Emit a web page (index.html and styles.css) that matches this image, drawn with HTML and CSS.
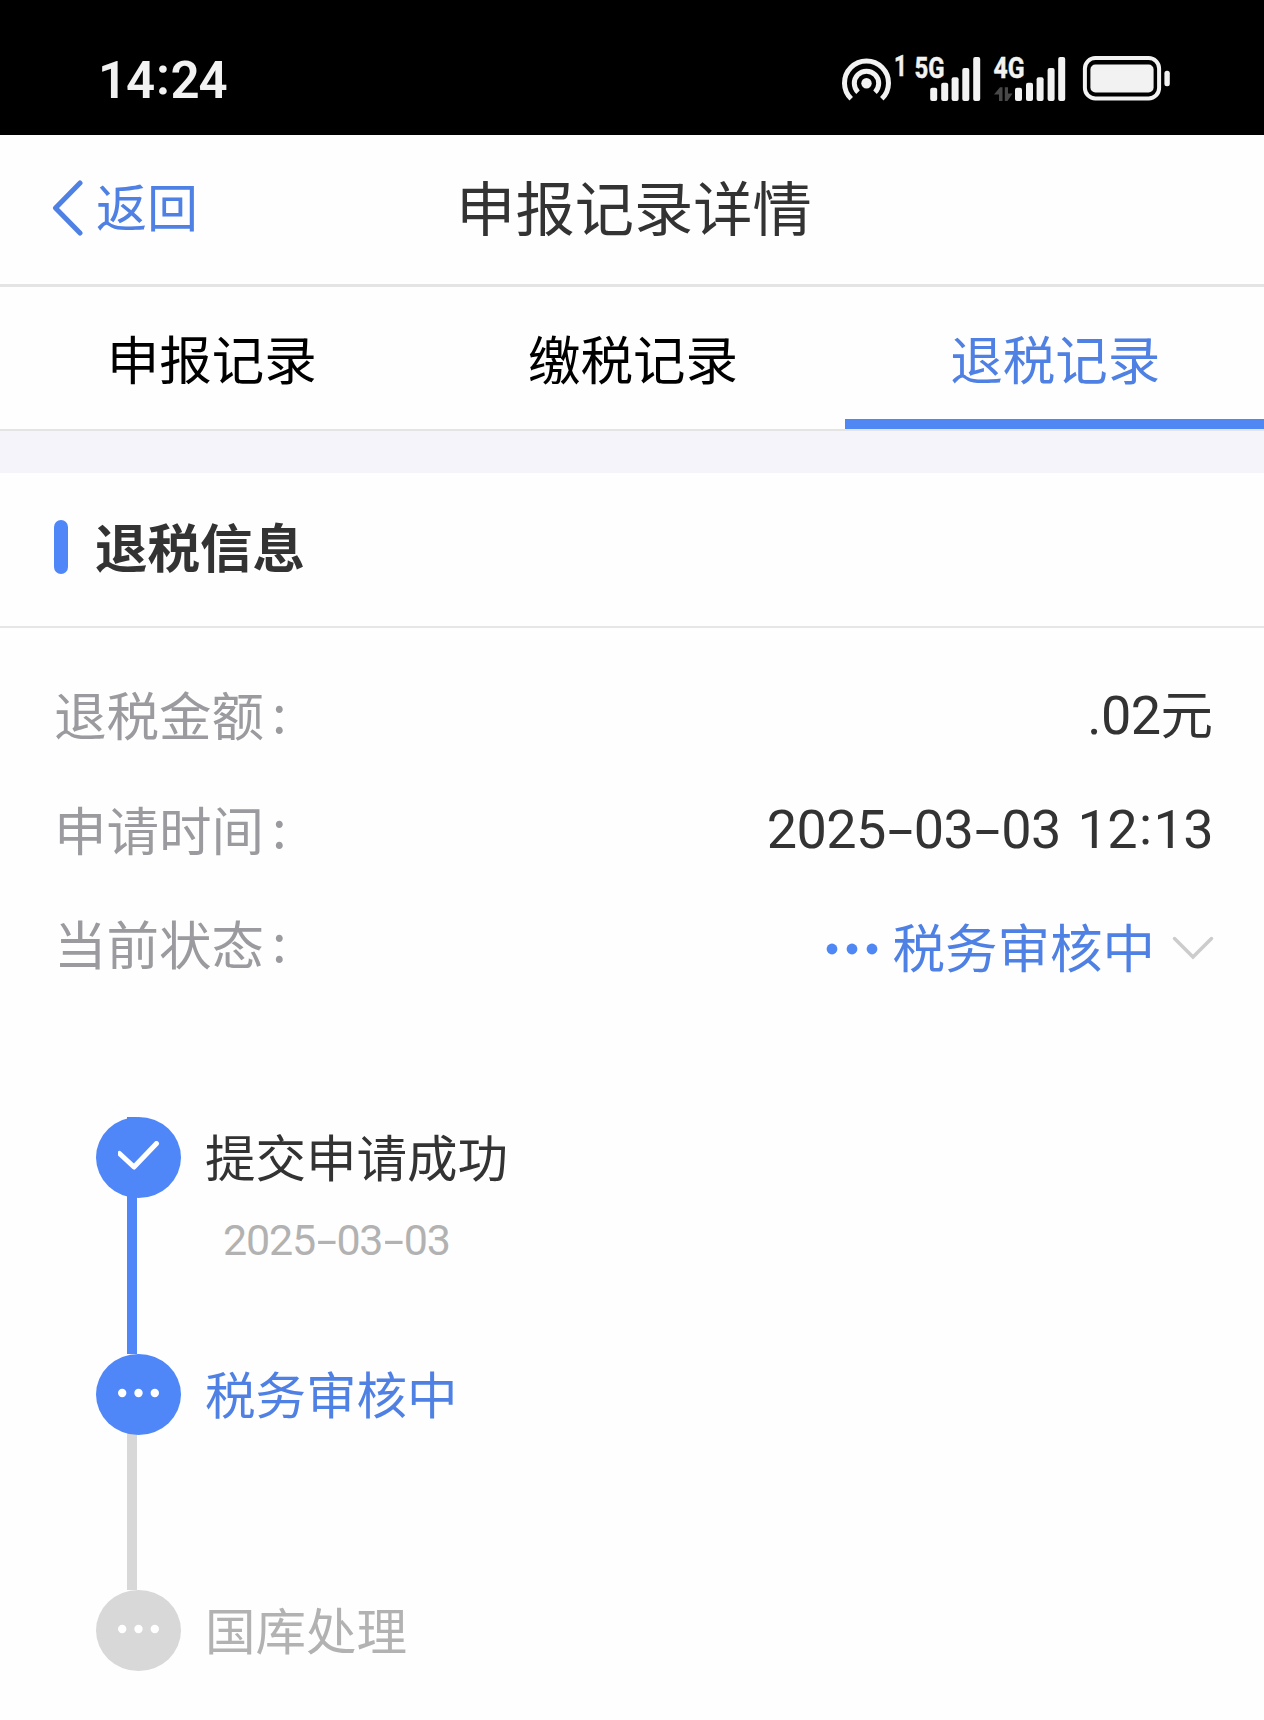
FILE: index.html
```html
<!DOCTYPE html>
<html lang="zh-CN">
  <head>
    <meta charset="UTF-8" />
    <meta name="viewport" content="width=device-width, initial-scale=1.0" />
    <title>申报记录详情</title>
    <link rel="stylesheet" href="styles.css">
  </head>
  <body>
    <div class="status-bar">
      <span class="time">14<i>:</i>24</span>
      <svg class="status-icons" width="370" height="80" viewBox="0 0 370 80">
        <!-- hotspot -->
        <g fill="none" stroke="#f2f2f2" stroke-width="5">
          <path d="M31.2 58.8A22 22 0 1 1 61.8 58.8" />
          <path d="M38 52.2A12.2 12.2 0 1 1 55 52.2" />
        </g>
        <circle cx="46.5" cy="43.2" r="5.2" fill="#f2f2f2" />
        <!-- network labels -->
        <g class="net">
          <text x="74" y="35.7" textLength="13" lengthAdjust="spacingAndGlyphs">1</text>
          <text x="94.5" y="38.3" textLength="30" lengthAdjust="spacingAndGlyphs">5G</text>
          <text x="173.5" y="38.3" textLength="31" lengthAdjust="spacingAndGlyphs">4G</text>
        </g>
        <!-- signal bars -->
        <g fill="#f2f2f2">
          <rect x="110.2" y="47.7" width="7" height="13.3" rx="2" />
          <rect x="121.2" y="42.7" width="7" height="18.3" rx="2" />
          <rect x="131.6" y="37.3" width="7" height="23.7" rx="2" />
          <rect x="142.3" y="28" width="7" height="33" rx="2" />
          <rect x="153.2" y="17" width="7" height="44" rx="2" />
          <rect x="195" y="47.7" width="7" height="13.3" rx="2" />
          <rect x="206" y="42.7" width="7" height="18.3" rx="2" />
          <rect x="216.6" y="37.3" width="7" height="23.7" rx="2" />
          <rect x="227.6" y="28" width="7" height="33" rx="2" />
          <rect x="238.2" y="17" width="7" height="44" rx="2" />
        </g>
        <path d="M174 54.5L180 47.2H182.5V61H179V54.5ZM184.8 47.2H188V53.5H192.5L187.5 61H184.8Z" fill="#484848" />
        <!-- battery -->
        <rect x="264.9" y="18" width="74.2" height="40.4" rx="10.5" fill="none" stroke="#f2f2f2" stroke-width="4" />
        <rect x="270.4" y="24.5" width="63.2" height="28" rx="5" fill="#f2f2f2" />
        <rect x="344.4" y="30.7" width="5.4" height="15.6" rx="2.5" fill="#f2f2f2" />
      </svg>
    </div>

    <header class="header">
      <a class="back">
        <svg width="32" height="58" viewBox="0 0 32 58">
          <path d="M28 4L3.5 29L28 54" />
        </svg>
        返回
      </a>
      <h1>申报记录详情</h1>
    </header>

    <nav class="tabs">
      <a class="tab">申报记录</a>
      <a class="tab">缴税记录</a>
      <a class="tab active">退税记录</a>
    </nav>

    <section class="card">
      <h2>退税信息</h2>
      <div class="info">
        <div class="row">
          <span class="label">退税金额<i>:</i></span>
          <span class="value"><b>.02</b>元</span>
        </div>
        <div class="row">
          <span class="label">申请时间<i>:</i></span>
          <span class="value"><b>2025<u>-</u>03<u>-</u>03 12<i>:</i>13</b></span>
        </div>
        <div class="row">
          <span class="label">当前状态<i>:</i></span>
          <span class="value status">
            <svg width="52" height="12" viewBox="0 0 52 12" fill="#4f87f5">
              <circle cx="6" cy="6" r="5.4" />
              <circle cx="26" cy="6" r="5.4" />
              <circle cx="46" cy="6" r="5.4" />
            </svg>
            税务审核中
            <svg class="arrow" width="42" height="24" viewBox="0 0 42 24">
              <path d="M2.5 2.5L21 21L39.5 2.5" />
            </svg>
          </span>
        </div>
      </div>

      <ul class="steps">
        <li class="step done">
          <span class="dot">
            <svg width="42" height="30" viewBox="0 0 42 30">
              <path d="M1.5 12.5L16 26L38.5 2.5" />
            </svg>
          </span>
          <div class="text">
            <p>提交申请成功</p>
            <time>2025<u>-</u>03<u>-</u>03</time>
          </div>
        </li>
        <li class="step current">
          <span class="dot">
            <svg width="42" height="10" viewBox="0 0 42 10" fill="#fff">
              <circle cx="4.2" cy="5" r="4.2" />
              <circle cx="20.5" cy="5" r="4.2" />
              <circle cx="36.8" cy="5" r="4.2" />
            </svg>
          </span>
          <div class="text">
            <p>税务审核中</p>
          </div>
        </li>
        <li class="step">
          <span class="dot">
            <svg width="42" height="10" viewBox="0 0 42 10" fill="#fff">
              <circle cx="4.2" cy="5" r="4.2" />
              <circle cx="20.5" cy="5" r="4.2" />
              <circle cx="36.8" cy="5" r="4.2" />
            </svg>
          </span>
          <div class="text">
            <p>国库处理</p>
          </div>
        </li>
      </ul>
    </section>
  </body>
</html>
```

FILE: styles.css
```css
* {
  box-sizing: border-box;
}

body {
  font-family: "Noto Sans CJK SC", sans-serif;
  background-color: #fefefe;
  margin: 0;
  min-height: 1720px;
  color: #333;
}

h1,
h2,
p,
ul {
  margin: 0;
  padding: 0;
  font-weight: 400;
}

b,
i,
u {
  font-weight: inherit;
  font-style: normal;
  text-decoration: none;
}

svg {
  flex: none;
}

.status-bar {
  display: flex;
  justify-content: space-between;
  align-items: center;
  height: 135px;
  padding: 25px 74px 0 98px;
  background-color: #000;
}

.time {
  font-family: Roboto, sans-serif;
  font-size: 51px;
  font-weight: 600;
  letter-spacing: -1.2px;
  color: #f2f2f2;
}

.time i {
  padding: 0 2px;
  vertical-align: 4px;
  line-height: 1;
}

.net {
  font-family: Roboto, sans-serif;
  font-size: 30px;
  font-weight: 700;
  fill: #f2f2f2;
  stroke: #f2f2f2;
  stroke-width: 0.5;
}

.header {
  display: grid;
  grid-template-columns: 1fr auto 1fr;
  align-items: center;
  height: 152px;
  padding: 0 48px 10px 52px;
  border-bottom: 3px solid #e4e4e4;
}

.header h1 {
  font-size: 59.3px;
  line-height: 80px;
}

.back {
  display: flex;
  align-items: center;
  gap: 12px;
  font-size: 51px;
  line-height: 70px;
  color: #4f80e3;
}

.back svg {
  margin-top: 6px;
}

.back path {
  fill: none;
  stroke: #4f80e3;
  stroke-width: 5;
  stroke-linecap: round;
  stroke-linejoin: round;
}

.tabs {
  display: grid;
  grid-template-columns: repeat(3, 1fr);
  height: 144px;
  border-bottom: 2px solid #e4e4e4;
}

.tab {
  padding: 32px 0 0 2px;
  font-size: 52.5px;
  line-height: 76px;
  text-align: center;
  color: #000;
}

.tab.active {
  margin-left: 2px;
  color: #4f80e3;
  border-bottom: 10px solid #4f87f5;
}

.card {
  border-top: 42px solid #f4f4fa;
}

.card h2 {
  display: flex;
  align-items: center;
  gap: 27px;
  height: 155px;
  padding: 0 54px 9px;
  font-size: 52.5px;
  font-weight: 700;
  border-bottom: 2px solid #e6e6e6;
}

.card h2::before {
  content: "";
  width: 14px;
  height: 54px;
  margin-top: 3px;
  border-radius: 7px;
  background-color: #4f87f9;
}

.info {
  padding: 28px 51px 0 54px;
}

.row {
  display: flex;
  justify-content: space-between;
  align-items: center;
  height: 114.5px;
  font-size: 52.5px;
  line-height: 76px;
}

.label {
  color: #9b9b9f;
}

.label i {
  margin-left: 8px;
  vertical-align: 3px;
  line-height: 1;
}

.value b {
  font-family: Roboto, sans-serif;
  font-size: 54px;
  letter-spacing: -0.6px;
  word-spacing: 4px;
}

.value b i {
  padding: 0 2px;
  vertical-align: 4px;
  line-height: 1;
}

/* wide hyphen, same length as a digit */
u {
  display: inline-block;
  width: 28px;
  text-align: center;
  transform: scaleX(1.7);
}

.status {
  display: flex;
  align-items: center;
  gap: 14px;
  padding-top: 6px;
  color: #4f80e3;
}

.status svg {
  margin-top: 7px;
}

.status .arrow {
  margin: 5px -1px 0 3px;
}

.arrow path {
  fill: none;
  stroke: #ccc;
  stroke-width: 3.5;
  stroke-linecap: round;
}

.steps {
  padding: 117.5px 96px 0;
  list-style: none;
}

.step {
  display: flex;
  gap: 24px;
  height: 237px;
  color: #b2b2b2;
  /* connecting line */
  background: linear-gradient(#d8d8d8, #d8d8d8) 31px 0 / 10px 100% no-repeat;
}

.step.done {
  background-image: linear-gradient(#4f87f9, #4f87f9);
}

.step.current {
  height: 236px;
  background-position: 31px 40px;
}

.step:last-child {
  height: 130px;
  background: none;
}

.dot {
  display: flex;
  justify-content: center;
  align-items: center;
  flex: none;
  width: 85px;
  height: 81px;
  padding-bottom: 3px;
  border-radius: 50%;
  background-color: #d8d8d8;
}

.done .dot,
.current .dot {
  background-color: #4f87f9;
}

.dot path {
  fill: none;
  stroke: #fff;
  stroke-width: 5;
  stroke-linecap: round;
  stroke-linejoin: round;
}

.text p {
  font-size: 50.5px;
  line-height: 76px;
}

.done p {
  color: #333;
}

.current p {
  color: #4f80e3;
}

.text time {
  display: block;
  margin: 19px 0 0 18px;
  font-family: Roboto, sans-serif;
  font-size: 43px;
  line-height: 56px;
  letter-spacing: -1.2px;
}

.text u {
  width: 21.5px;
}
```
